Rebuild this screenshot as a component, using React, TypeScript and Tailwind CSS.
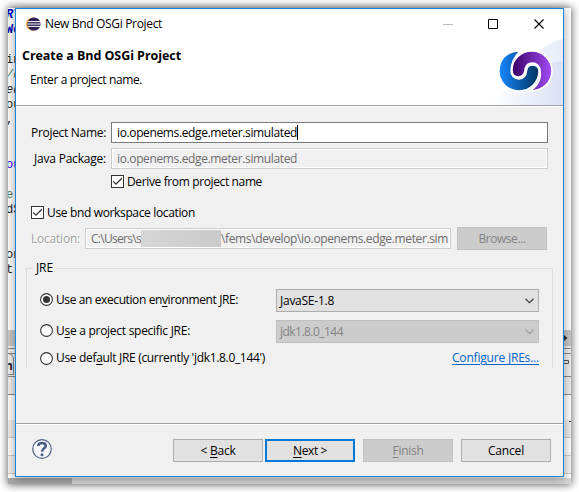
import { useLayoutEffect, useRef, type ReactNode } from "react";

/* Text run whose tracking is adjusted so that it spans exactly w pixels. */
function T({ w, className = "", children }: { w: number; className?: string; children: ReactNode }) {
  const ref = useRef<HTMLSpanElement>(null);
  useLayoutEffect(() => {
    const el = ref.current;
    if (!el) return;
    el.style.letterSpacing = "0px";
    const n = (el.textContent || "").length;
    const width = el.getBoundingClientRect().width;
    el.style.letterSpacing = `${(w - width) / n}px`;
  }, [w]);
  return (
    <span ref={ref} className={`inline-block whitespace-pre ${className}`}>
      {children}
    </span>
  );
}

function U({ children }: { children: ReactNode }) {
  return <span className="underline decoration-1 underline-offset-2">{children}</span>;
}

function Check() {
  return (
    <span className="flex size-[13px] shrink-0 border border-[#333] bg-white">
      <svg width="11" height="11" viewBox="0 0 11 11" fill="none" stroke="#333" strokeWidth="1.3">
        <path d="M1.2 5.4 4 8.2 9.8 2.3" />
      </svg>
    </span>
  );
}

function Radio({ on = false }: { on?: boolean }) {
  return (
    <svg width="13" height="13" viewBox="0 0 13 13" className="shrink-0">
      <circle cx="6.5" cy="6.5" r="5.9" fill="#fff" stroke="#333" strokeWidth="1.1" />
      {on && <circle cx="6.5" cy="6.5" r="3.5" fill="#333" />}
    </svg>
  );
}

function Select({ label, w, disabled = false }: { label: string; w: number; disabled?: boolean }) {
  return (
    <div
      className={`flex h-[23px] w-[263px] items-center justify-between border pr-1 pl-[3px] ${
        disabled ? "border-[#bfbfbf] bg-[#ccc] text-[#838383]" : "border-[#adadad] bg-[#e1e1e1]"
      }`}
    >
      <T w={w}>{label}</T>
      <svg width="9" height="6" viewBox="0 0 9 6" fill="none" stroke={disabled ? "#a0a0a0" : "#444"} strokeWidth="1.3">
        <path d="M.5.8 4.5 4.6 8.5.8" />
      </svg>
    </div>
  );
}

function Button({ kind = "normal", children }: { kind?: "normal" | "focus" | "disabled"; children: ReactNode }) {
  const look = {
    normal: "border border-[#adadad] bg-[#e1e1e1]",
    focus: "border-2 border-[#0078d7] bg-[#e1e1e1]",
    disabled: "border border-[#bfbfbf] bg-[#ccc] text-[#838383]",
  }[kind];
  return <div className={`flex h-[23px] w-[90px] shrink-0 items-center justify-center ${look}`}>{children}</div>;
}

function EclipseIcon() {
  return (
    <svg width="15" height="14" viewBox="0 0 15 14">
      <circle cx="6.8" cy="7" r="6.6" fill="#f7941e" />
      <circle cx="8" cy="7" r="6.6" fill="#2c2255" />
      <path d="M2 4.6h12M1.6 7h12.8M2 9.4h12" stroke="#fff" strokeWidth="1" />
    </svg>
  );
}

function Banner() {
  return (
    <svg width="82" height="74" viewBox="481 31 82 74" className="-mt-2 shrink-0">
      <defs>
        <linearGradient id="haze" x1="0" x2="1">
          <stop offset="0" stopColor="#fff" />
          <stop offset="1" stopColor="#dae1f5" />
        </linearGradient>
        <linearGradient id="haze2" x1="0" x2="1">
          <stop offset="0" stopColor="#fff" />
          <stop offset="1" stopColor="#e7ecf8" />
        </linearGradient>
        <linearGradient id="blue" gradientUnits="userSpaceOnUse" x1="499" x2="539" y1="70" y2="70">
          <stop offset="0" stopColor="#1688ff" />
          <stop offset="1" stopColor="#00335f" />
        </linearGradient>
        <linearGradient id="violet" gradientUnits="userSpaceOnUse" x1="512" x2="552" y1="70" y2="70">
          <stop offset="0" stopColor="#3a0064" />
          <stop offset="1" stopColor="#a54cf7" />
        </linearGradient>
      </defs>
      <path d="M520 75Q539 43 563 39V105H500Z" fill="url(#haze2)" />
      <path d="M490 105C515 80 540 62 563 61V105Z" fill="url(#haze)" />
      <path
        d="M520 51C505 51 499 61 499 71C499 82 508 91 519 91C530 91 538 83 539 72C539 67 536 65 532.500 65C529 65 527 67 526.500 71C526 76 523 79 519 79C514 79 511 75 511 71C511 62 516 55 520 51Z"
        fill="url(#blue)" stroke="#fff" strokeWidth="1.400"
      />
      <path
        d="M530 91C541 84 541 76 540 70C539 65 536 63 532.500 63C527 63 525 67 525 71C524 75 522 77 518.500 77C514 77 512 74 512 70C512 59 521 51 532 51C543 51 552 60 552 71C552 82 543 91 530 91Z"
        fill="url(#violet)" stroke="#fff" strokeWidth="1.600"
      />
    </svg>
  );
}

const code = [
  { y: "-top-px", c: "text-[#0000c0] font-bold italic", t: "RT" },
  { y: "top-[14px]", c: "text-[#0000c0] font-bold", t: "Wo" },
  { y: "top-[44px]", c: "text-[#222]", t: "in" },
  { y: "top-[59px]", c: "text-[#3f7f5f] italic", t: "/e" },
  { y: "top-[74px]", c: "text-[#222] italic", t: "ed" },
  { y: "top-[89px]", c: "text-[#222]", t: "ou" },
  { y: "top-[104px]", c: "text-[#222]", t: "," },
  { y: "top-[149px]", c: "text-[#2a00ff]", t: "ou" },
  { y: "top-[179px]", c: "text-[#3f7f5f]", t: "e" },
  { y: "top-[194px]", c: "text-[#222]", t: "dS" },
  { y: "top-[239px]", c: "text-[#222]", t: "on" },
  { y: "top-[254px]", c: "text-[#222]", t: "t)" },
];

/* Editor window that shows around the edges of the dialog. */
function Backdrop() {
  return (
    <div className="absolute top-2 left-2 h-[476px] w-[563px] overflow-hidden bg-white shadow-[0_0_8px_1px_#777]">
      <div className="flex h-full flex-col">
        <div className="h-[322px]" />
        <div className="h-4 bg-[#c8c8c8]" />
        <div className="h-[2px] bg-[#f0f0f0]" />
        <div className="h-[6px] border-y border-[#888] bg-[#f0f0f0]" />
        <div className="h-[22px] bg-[#f0f0f0]" />
        <div className="h-[19px] border-y border-[#888] bg-[#eee]" />
        <div className="h-[25px]" />
        <div className="h-[18px] border-b border-[#ccc] bg-[#eee]" />
        <div className="h-[18px] border-b border-[#ccc]" />
        <div className="h-[18px] border-b border-[#ccc] bg-[#f5f5f5]" />
        <div className="h-[4px]" />
        <div className="flex h-[6px] bg-[#d8d8d8]">
          <div className="w-16 bg-[#aaa]" />
        </div>
      </div>
      {code.map((l) => (
        <span key={l.y} className={`absolute -left-[2px] font-['Liberation_Mono',monospace] text-[12px] leading-[16px] ${l.y} ${l.c}`}>
          {l.t}
        </span>
      ))}
      <span className="absolute top-[345px] -left-[4px] h-[22px] w-[10px] rounded-tr-md border border-[#888] pr-[3px] text-right font-bold leading-[24px] text-[#223]">n</span>
      <svg className="absolute top-[322px] right-0" width="7" height="60" viewBox="0 0 7 60">
        <path d="M0 5 3.500 8 0 11Z" fill="#333" />
        <path d="M0 30.500H4.500V33.500H0" fill="none" stroke="#555" />
      </svg>
      <span className="absolute top-[413px] right-0 h-px w-[2px] bg-[#444]" />
    </div>
  );
}

export default function App() {
  return (
    <div className="relative h-[492px] w-[579px] overflow-hidden bg-white font-['Open_Sans','Noto_Sans',sans-serif] text-[12px] leading-[16px] text-black">
      <Backdrop />
      <div className="absolute top-2 left-[15px] flex h-[469px] w-[549px] flex-col border border-[#1883d7] bg-[#f0f0f0] shadow-[0_2px_9px_1px_rgba(0,0,0,0.33)]">
        <header className="flex h-[97px] shrink-0 flex-col border-b border-[#a0a0a0] bg-white">
          <div className="flex h-[30px] shrink-0 items-center pl-[10px]">
            <EclipseIcon />
            <T w={117} className="ml-1 grow-0">New Bnd OSGi Project</T>
            <svg className="mr-[18px] ml-auto" width="102" height="11" viewBox="0 0 102 11" fill="none" stroke="#000">
              <path d="M0 5.500H10" stroke="#bbb" />
              <path d="M45.500.5H54.500V9.500H45.500Z" />
              <path d="M91.500.5 100.500 9.500M100.500.5 91.500 9.500" strokeWidth="1.100" />
            </svg>
          </div>
          <div className="flex h-[66px] justify-between">
            <div className="flex flex-col pt-[9px] pl-[6px]">
              <T w={159} className="text-[12.5px] font-bold">Create a Bnd OSGi Project</T>
              <T w={112} className="mt-2 ml-2 self-start">Enter a project name.</T>
            </div>
            <Banner />
          </div>
        </header>
        <main className="flex h-[317px] shrink-0 flex-col border-t border-white pr-[15px] pl-[15px]">
          <div className="mt-[15px] flex h-[21px] items-center">
            <T w={75}>Project Name:</T>
            <div className="ml-[5px] flex h-[21px] w-[437px] items-center border border-[#7a7a7a] bg-white pl-[5px]">
              <T w={180}>io.openems.edge.meter.simulated</T>
              <span className="h-[15px] w-px bg-black" />
            </div>
          </div>
          <div className="mt-[5px] flex h-[21px] items-center">
            <T w={72} className="ml-[3px]">Java Package:</T>
            <div className="ml-[5px] flex h-[21px] w-[437px] items-center border border-[#ccc] pl-[5px] text-[#6d6d6d] shadow-[inset_0_0_0_1px_white]">
              <T w={180}>io.openems.edge.meter.simulated</T>
            </div>
          </div>
          <div className="mt-[6px] flex h-[13px] items-center gap-[3px] pl-20">
            <Check />
            <T w={135}>Derive from project name</T>
          </div>
          <div className="mt-[18px] flex h-[13px] items-center gap-[3px]">
            <Check />
            <T w={148}>Use bnd workspace location</T>
          </div>
          <div className="mt-2 flex h-[23px] items-center">
            <T w={49} className="text-[#a0a0a0] [text-shadow:1px_1px_0_white]">Location:</T>
            <div className="ml-[5px] flex h-[21px] w-[366px] items-center overflow-hidden border border-[#ccc] pl-[5px] text-[#6d6d6d] shadow-[inset_0_0_0_1px_white]">
              <T w={50}>C:\Users\s</T>
              <span className="h-[17px] w-[80px] shrink-0 bg-linear-to-r from-[#d6d6d6] via-[#d0d0d0] to-[#cacaca]" />
              <T w={227}>\fems\develop\io.openems.edge.meter.sim</T>
            </div>
            <div className="ml-[6px]">
              <Button kind="disabled"><T w={47}>Browse...</T></Button>
            </div>
          </div>
          <fieldset className="mt-[10px] -ml-[5px] h-[108px] w-[527px] border border-b-0 border-[#dcdcdc] px-[13px]">
            <legend className="-ml-[7px] px-[3px]"><T w={17}>JRE</T></legend>
            <div className="mt-[13px] flex h-[23px] justify-between">
              <div className="flex h-[21px] items-center gap-[3px]">
                <Radio on />
                <T w={182}>Use an execution en<U>v</U>ironment JRE:</T>
              </div>
              <Select label="JavaSE-1.8" w={54} />
            </div>
            <div className="mt-2 flex h-[23px] justify-between">
              <div className="flex h-[21px] items-center gap-[3px]">
                <Radio />
                <T w={134}>U<U>s</U>e a project specific JRE:</T>
              </div>
              <Select label="jdk1.8.0_144" w={63} disabled />
            </div>
            <div className="mt-[7px] flex h-4 items-center">
              <Radio />
              <T w={209} className="ml-[3px]">Use def<U>a</U>ult JRE (currently 'jdk1.8.0_144')</T>
              <T w={87} className="ml-auto text-[#0066cc] underline underline-offset-2">Configure JREs...</T>
            </div>
          </fieldset>
        </main>
        <footer className="flex flex-1 items-center border-t border-[#a0a0a0] pt-px pr-3 pl-4 shadow-[inset_0_1px_0_white]">
          <svg className="-mt-[3px]" width="20" height="20" viewBox="0 0 20 20">
            <circle cx="10" cy="10" r="9.300" fill="#f7f7fa" stroke="#526387" strokeWidth="1.200" />
            <path d="M6.200 7C6.400 2.900 13.800 2.900 13.800 7C13.800 9.300 10 9.500 10 12.700" fill="none" stroke="#4a5b84" strokeWidth="2.500" />
            <circle cx="10" cy="15.700" r="1.500" fill="#4a5b84" />
          </svg>
          <div className="ml-auto flex">
            <Button><T w={35}>{"< "}<U>B</U>ack</T></Button>
            <div className="ml-[2px]"><Button kind="focus"><T w={34}><U>N</U>{"ext >"}</T></Button></div>
            <div className="ml-2"><Button kind="disabled"><T w={31}><U>F</U>inish</T></Button></div>
            <div className="ml-2"><Button><T w={36}>Cancel</T></Button></div>
          </div>
        </footer>
      </div>
    </div>
  );
}
